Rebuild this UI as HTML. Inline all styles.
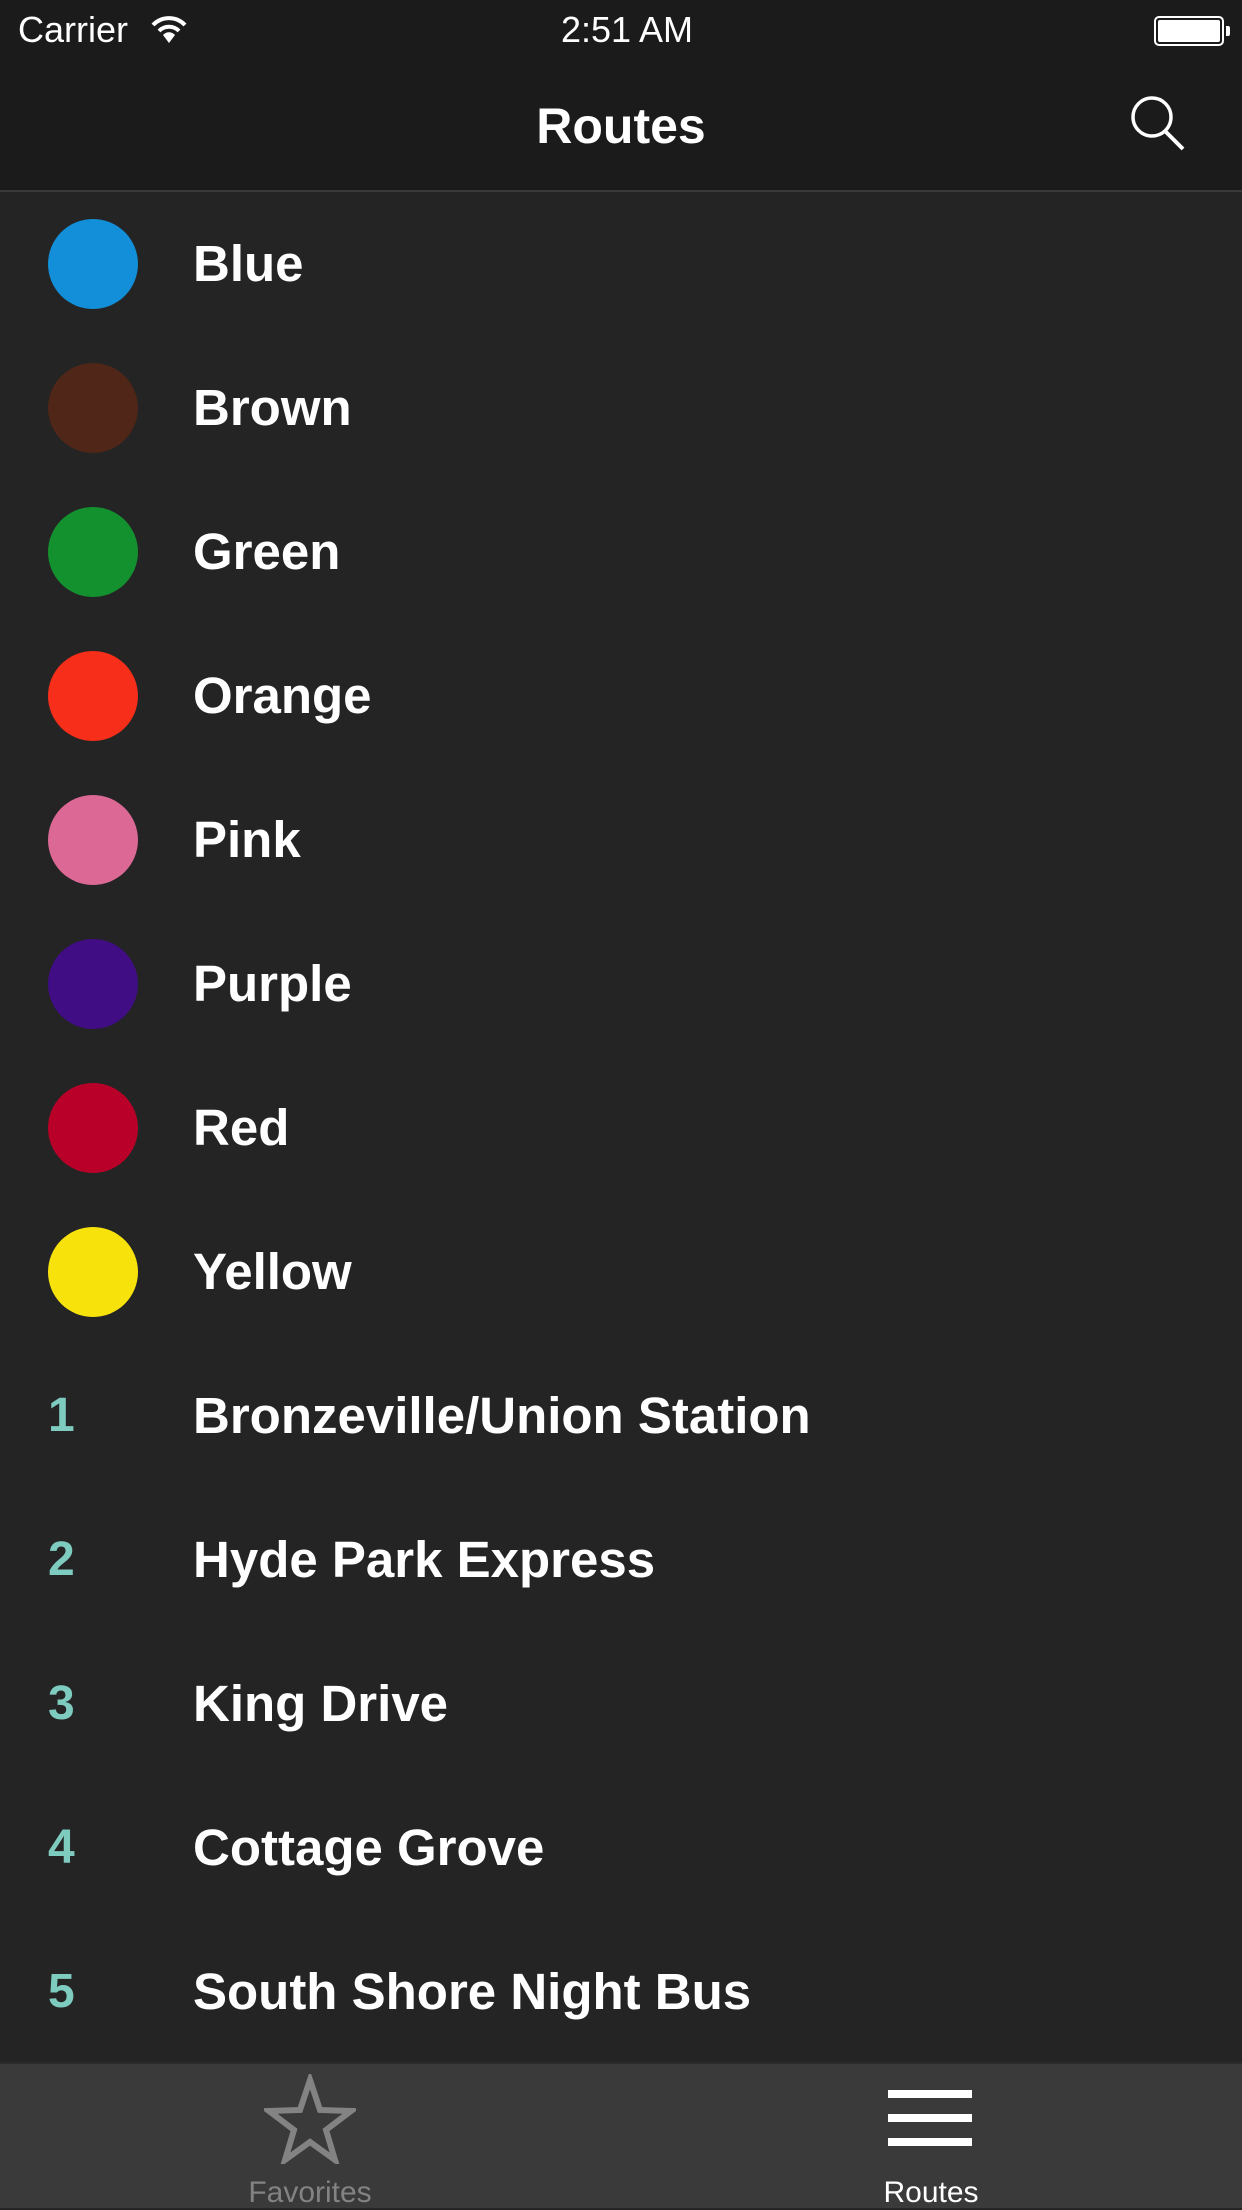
<!DOCTYPE html>
<html><head><meta charset="utf-8"><style>
*{margin:0;padding:0;box-sizing:border-box}
body{width:1242px;height:2208px;background:#242424;font-family:"Liberation Sans",sans-serif;color:#fff;position:relative;overflow:hidden}
.top{position:absolute;left:0;top:0;width:1242px;height:192px;background:#1b1b1b;border-bottom:2px solid #3a3a3a}
.sb{position:absolute;top:8px;font-size:36px;line-height:44px}
.title{position:absolute;top:94px;width:100%;text-align:center;font-size:50px;font-weight:bold;line-height:64px}
.row{position:absolute;left:0;width:1242px;height:144px}
.dot{position:absolute;left:48px;top:27px;width:90px;height:90px;border-radius:50%}
.num{position:absolute;left:48px;top:0;line-height:144px;font-size:48px;font-weight:bold;color:#7ecbc0}
.txt{position:absolute;left:193px;top:0;line-height:144px;font-size:51px;font-weight:bold}
.tab{position:absolute;left:0;top:2062px;width:1242px;height:146px;background:#3a3a3a;border-top:2px solid #2c2c2c}
.tl{position:absolute;top:112px;font-size:30px;width:300px;text-align:center}
</style></head><body>
<div class="top">
 <div class="sb" style="left:18px">Carrier</div>
 <svg style="position:absolute;left:150px;top:14px" width="38" height="30" viewBox="0 0 38 30"><path d="M3 11 A22 22 0 0 1 35 11" stroke="#fff" stroke-width="4" fill="none"/><path d="M9 17 A14 14 0 0 1 29 17" stroke="#fff" stroke-width="4" fill="none"/><path d="M19 29 L13 21 A8 8 0 0 1 25 21Z" fill="#fff"/></svg>
 <div class="sb" style="left:0;width:1254px;text-align:center">2:51 AM</div>
 <div style="position:absolute;left:1154px;top:16px;width:70px;height:30px;border:2px solid #fff;border-radius:5px;padding:2px"><div style="width:100%;height:100%;background:#fff;border-radius:2px"></div></div>
 <div style="position:absolute;left:1226px;top:26px;width:4px;height:10px;background:#fff;border-radius:0 2px 2px 0"></div>
 <div class="title">Routes</div>
 <svg style="position:absolute;left:1129px;top:94px" width="60" height="60" viewBox="0 0 60 60"><circle cx="23" cy="23" r="19" stroke="#fff" stroke-width="3.5" fill="none"/><path d="M36 37 L54 55" stroke="#fff" stroke-width="4"/></svg>
</div>

<div class="row" style="top:192px"><div class="dot" style="background:#128fd8"></div><div class="txt">Blue</div></div>
<div class="row" style="top:336px"><div class="dot" style="background:#4f2618"></div><div class="txt">Brown</div></div>
<div class="row" style="top:480px"><div class="dot" style="background:#13912f"></div><div class="txt">Green</div></div>
<div class="row" style="top:624px"><div class="dot" style="background:#f62e1a"></div><div class="txt">Orange</div></div>
<div class="row" style="top:768px"><div class="dot" style="background:#dc6895"></div><div class="txt">Pink</div></div>
<div class="row" style="top:912px"><div class="dot" style="background:#400d84"></div><div class="txt">Purple</div></div>
<div class="row" style="top:1056px"><div class="dot" style="background:#b90028"></div><div class="txt">Red</div></div>
<div class="row" style="top:1200px"><div class="dot" style="background:#f8e20c"></div><div class="txt">Yellow</div></div>
<div class="row" style="top:1344px"><div class="num">1</div><div class="txt">Bronzeville/Union Station</div></div>
<div class="row" style="top:1488px"><div class="num">2</div><div class="txt">Hyde Park Express</div></div>
<div class="row" style="top:1632px"><div class="num">3</div><div class="txt">King Drive</div></div>
<div class="row" style="top:1776px"><div class="num">4</div><div class="txt">Cottage Grove</div></div>
<div class="row" style="top:1920px"><div class="num">5</div><div class="txt">South Shore Night Bus</div></div>

<div class="tab">
 <svg style="position:absolute;left:264px;top:10px" width="92" height="90" viewBox="0 0 92 90"><path d="M46 6 L56 36 L87 37 L62 56 L71 86 L46 68 L21 86 L30 56 L5 37 L36 36Z" stroke="#838383" stroke-width="6" fill="none" stroke-linejoin="miter"/></svg>
 <div class="tl" style="left:160px;color:#838383">Favorites</div>
 <div style="position:absolute;left:888px;top:26px;width:84px;height:8px;background:#fff"></div>
 <div style="position:absolute;left:888px;top:50px;width:84px;height:8px;background:#fff"></div>
 <div style="position:absolute;left:888px;top:74px;width:84px;height:8px;background:#fff"></div>
 <div class="tl" style="left:781px;color:#fff">Routes</div>
</div>
</body></html>
